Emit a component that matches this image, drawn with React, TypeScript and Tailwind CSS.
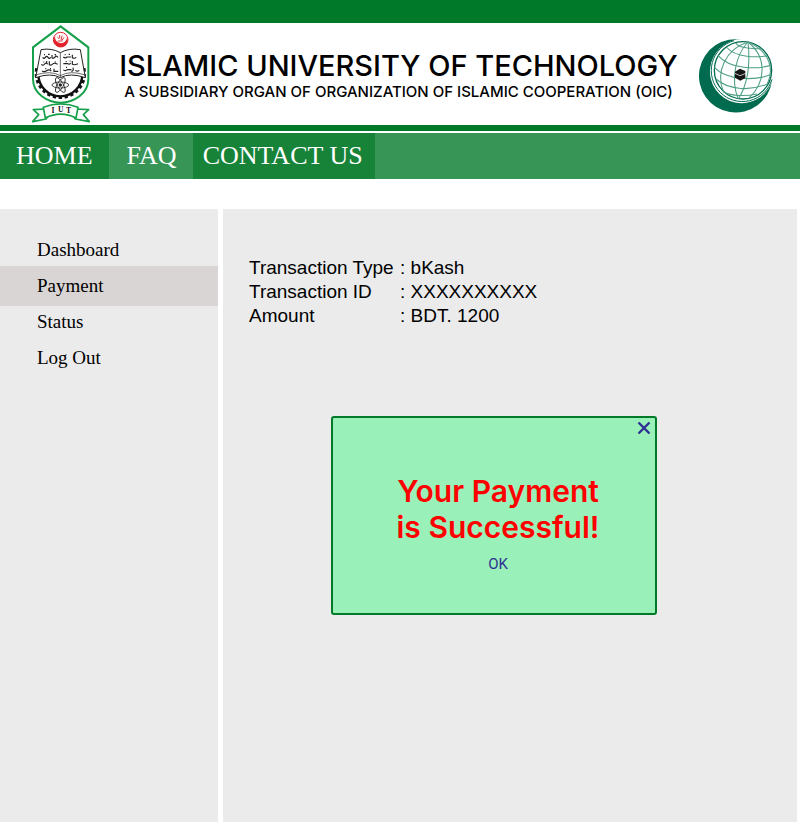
import React from "react";

const green = "#16a04a";
const teal = "#006b4f";

function Crest() {
  const teeth = Array.from({ length: 15 }, (_, i) => {
    const a = ((-8 + i * 14) * Math.PI) / 180;
    return { x: 121 + 71 * Math.cos(a), y: 175 + 71 * Math.sin(a), r: -8 + i * 14 };
  });
  return (
    <svg viewBox="33 30 180 294" className="h-[98px] w-[60px] shrink-0" role="img" aria-label="University crest">
      <path
        d="M122 34 L205 97 V192 C205 236 162 263 122 263 C82 263 39 236 39 192 V97 Z"
        fill="#fff"
        stroke={green}
        strokeWidth="6"
      />
      <path d="M55 178 A66 66 0 0 0 187 178" fill="none" stroke="#111" strokeWidth="7" />
      {teeth.map((t) => (
        <rect key={t.r} x={t.x - 4} y={t.y - 5} width="10" height="10" fill="#111" transform={`rotate(${t.r} ${t.x} ${t.y})`} />
      ))}
      <circle cx="122" cy="74" r="22" fill="#fff" stroke="#e3222b" strokeWidth="3" />
      <path d="M106 62 A21 21 0 1 0 141 66 A18 17 0 1 1 106 62Z" fill="#e3222b" />
      <path d="M112 66 l5 5 M119 60 v10 M126 62 l-3 13 M132 67 l-6 9 M113 78 h15" stroke="#d8343b" strokeWidth="3" fill="none" />
      <path d="M63 104 Q94 98 121 113 Q148 98 181 104 L196 188 Q150 172 121 188 Q92 172 47 188 Z" fill="#fff" stroke="#222" strokeWidth="3" />
      <path d="M47 180 Q92 165 121 182 Q150 165 196 180 M121 113 V187" fill="none" stroke="#222" strokeWidth="2" />
      <g fill="none" stroke="#222" strokeWidth="3.5">
        <path d="M68 127 q4 6 8 0 t8 0 t8 0 M96 120 v8 q6 4 9 -2 t9 1 M72 119 h3 M84 118 h5 M104 119 h4" />
        <path d="M64 148 q5 5 10 -1 t9 1 M88 139 v10 q6 3 10 -2 t15 1 M70 141 h3 M104 141 h4 M80 138 v5" />
        <path d="M66 168 q7 4 14 -1 t14 1 M102 161 v8 h13 M76 161 h3 M90 161 h3" />
        <path d="M130 126 q6 5 11 0 h12 M157 119 v9 q6 4 12 -1 M134 119 h3 M146 118 h4" />
        <path d="M130 146 h13 q5 4 9 -2 M157 138 v10 q6 3 17 -2 M137 140 h3 M149 138 h3" />
        <path d="M130 165 q7 4 12 -1 h12 M159 158 q3 10 -5 11 M166 166 q6 5 12 0 M138 157 h3" />
      </g>
      <g fill="none" stroke="#222" strokeWidth="2.5">
        <ellipse cx="121" cy="210" rx="25" ry="9" />
        <ellipse cx="121" cy="210" rx="25" ry="9" transform="rotate(60 121 210)" />
        <ellipse cx="121" cy="210" rx="25" ry="9" transform="rotate(120 121 210)" />
      </g>
      <circle cx="121" cy="210" r="5" fill="#222" />
      <g fill="#fff" stroke={green} strokeWidth="5" strokeLinejoin="round">
        <path d="M76 282 L40 284 L56 299 L38 320 L78 312 L90 296 Z" />
        <path d="M168 282 L206 284 L190 299 L208 320 L166 312 L154 296 Z" />
        <path d="M70 277 Q122 256 174 277 L168 309 Q122 286 76 309 Z" />
      </g>
      <g fill="#111" fontFamily="Liberation Serif, serif" fontSize="23" fontWeight="700" textAnchor="middle">
        <text x="99" y="294">I</text>
        <text x="122" y="291">U</text>
        <text x="146" y="294">T</text>
      </g>
    </svg>
  );
}

function Globe() {
  return (
    <svg viewBox="24 24 228 228" className="mt-[3px] size-[76px] shrink-0" role="img" aria-label="OIC emblem">
      <path d="M160 30 A110 110 0 1 0 246 152 A95 95 0 1 1 160 30 Z" fill={teal} />
      <circle cx="157" cy="122" r="95" fill="#fff" />
      <g fill="none" stroke={teal}>
        <path d="M132 32 A93 93 0 1 0 246 148" strokeWidth="3" />
        <circle cx="159" cy="121" r="86" strokeWidth="4" />
      </g>
      <g fill="none" stroke="#4f9f86" strokeWidth="3.2">
        <path d="M174 36 C138 74 120 148 145 207" />
        <path d="M174 36 C104 58 76 130 101 186" />
        <path d="M174 36 C180 90 176 158 145 207" />
        <path d="M174 36 C232 82 228 158 176 205" />
        <path d="M174 36 C242 66 252 118 232 162" />
        <path d="M137 38 C145 56 198 57 215 56" />
        <path d="M109 51 C137 85 204 82 232 77" />
        <path d="M84 76 C119 119 203 118 243 106" />
        <path d="M73 112 C110 152 198 153 244 133" />
        <path d="M78 147 C118 182 184 183 234 161" />
        <path d="M99 185 C126 199 169 199 201 192" />
      </g>
      <path d="M135 125 L150 116 L166 123 V144 L151 152 L135 143 Z" fill="#161616" />
      <path d="M134 130 L150 137 L168 130" fill="none" stroke="#ddd" strokeWidth="2.5" />
    </svg>
  );
}

const nav = [
  { label: "HOME", style: "bg-[#178339] pr-4 pl-4" },
  { label: "FAQ", style: "pr-4 pl-[18px]" },
  { label: "CONTACT US", style: "bg-[#178339] pr-3 pl-[10px]" },
];

const side = ["Dashboard", "Payment", "Status", "Log Out"];

const details = [
  ["Transaction Type", "bKash"],
  ["Transaction ID", "XXXXXXXXXX"],
  ["Amount", "BDT. 1200"],
];

export default function App() {
  return (
    <div className="flex min-h-screen flex-col bg-white font-['Liberation_Sans',Arial,sans-serif] text-black">
      <div className="h-[23px] bg-[#007a29]" />
      <header className="flex h-[102px] items-center justify-between pr-[26px] pl-[31px]">
        <Crest />
        <div className="flex flex-1 flex-col items-center pt-1 pl-2 text-center font-['Inter',sans-serif] font-medium whitespace-nowrap">
          <h1 className="text-[29px] leading-8">ISLAMIC UNIVERSITY OF TECHNOLOGY</h1>
          <p className="text-[15px] leading-5">A SUBSIDIARY ORGAN OF ORGANIZATION OF ISLAMIC COOPERATION (OIC)</p>
        </div>
        <Globe />
      </header>
      <div className="h-[6px] bg-[#007a29]" />
      <nav className="mt-[2px] flex h-[46px] bg-[#379556] font-['Liberation_Serif',serif] text-[26px] text-white">
        {nav.map((n) => (
          <a key={n.label} href="#" className={`flex items-center pb-[2px] whitespace-nowrap ${n.style}`}>
            {n.label}
          </a>
        ))}
      </nav>
      <div className="mt-[30px] flex flex-1 gap-[5px] pr-[3px]">
        <aside className="w-[218px] shrink-0 bg-[#ebebeb] pt-[23px] font-['Liberation_Serif',serif] text-[19px]">
          <ul>
            {side.map((s) => (
              <li key={s}>
                <a
                  href="#"
                  className={`flex items-center pl-[37px] ${s === "Payment" ? "-my-[2px] h-10 bg-[#d9d5d4]" : "h-9"}`}
                >
                  {s}
                </a>
              </li>
            ))}
          </ul>
        </aside>
        <main className="flex-1 bg-[#ebebeb] pt-[47px] pl-[26px]">
          <dl className="text-[19px] leading-6">
            {details.map(([k, v]) => (
              <div key={k} className="flex">
                <dt className="w-[151px]">{k}</dt>
                <dd>: {v}</dd>
              </div>
            ))}
          </dl>
          <section
            role="dialog"
            aria-label="Payment status"
            className="mt-[88px] ml-[82px] flex h-[199px] w-[326px] flex-col rounded-[3px] border-2 border-[#007a29] bg-[#99f1b9] text-[#2e3192]"
          >
            <button type="button" aria-label="Close" className="mt-[3px] mr-1 self-end">
              <svg viewBox="0 0 14 14" className="size-[14px]" fill="none" stroke="currentColor" strokeWidth="2.4">
                <path d="M1.5 1.5 L12.5 12.5 M12.5 1.5 L1.5 12.5" />
              </svg>
            </button>
            <h2 className="mt-[38px] pl-2 text-center font-['Inter',sans-serif] text-[30px] leading-9 font-semibold text-[#ff0000]">
              Your Payment
              <br />
              is Successful!
            </h2>
            <button type="button" className="mt-[9px] ml-2 self-center font-['Roboto',sans-serif] text-[15px] leading-5">
              OK
            </button>
          </section>
        </main>
      </div>
    </div>
  );
}
